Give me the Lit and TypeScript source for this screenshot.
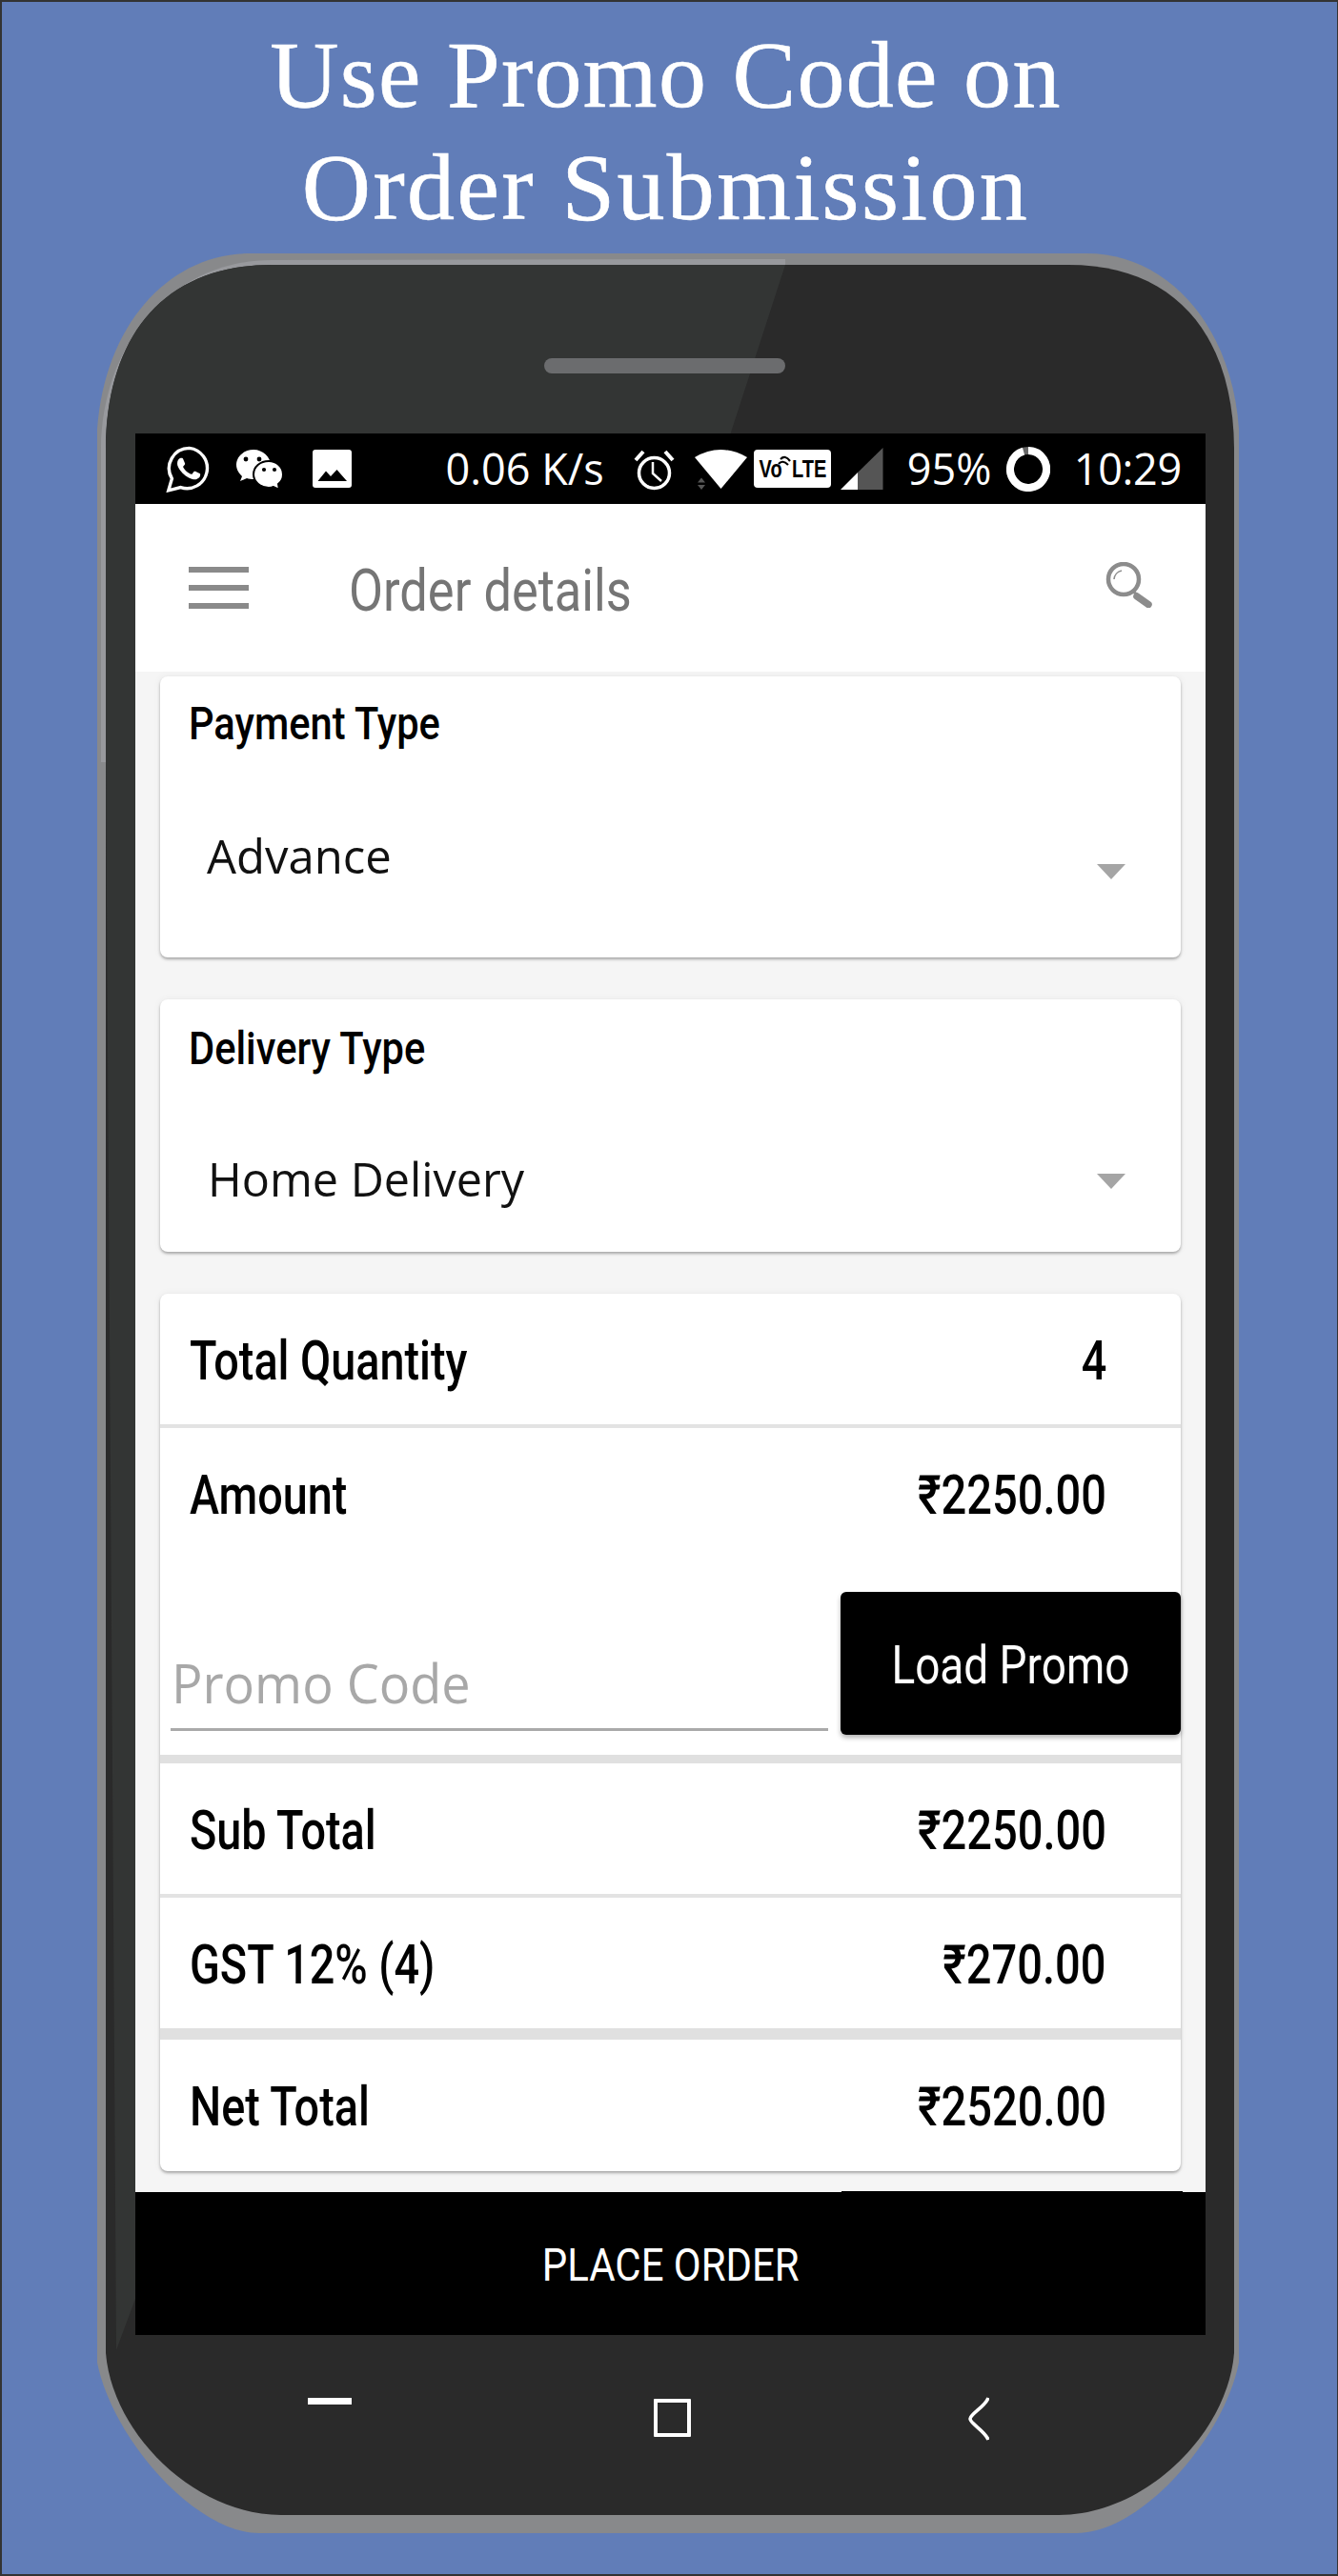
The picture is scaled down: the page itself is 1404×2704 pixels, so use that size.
import { LitElement, html, css } from "lit";
import { customElement } from "lit/decorators.js";

@customElement("app-root")
export class AppRoot extends LitElement {
  static styles = css`
    :host { display: block; width: 1404px; height: 2704px; }
    .page { width: 1404px; height: 2704px; box-sizing: border-box; background: #617db8; border-style: solid; border-color: #333; border-width: 2px 1px 2px 2px; padding-top: 18px; padding-left: 100px; overflow: hidden; }
    h1 { margin: 0 0 10px -100px; padding-right: 8px; font: 400 100px/118px "Liberation Serif", serif; color: #fff; text-align: center; -webkit-text-stroke: 0.6px #fff; }
    .l1 { letter-spacing: 1.3px; }
    .l2 { letter-spacing: 2.4px; }
    .phone { position: relative; width: 1198px; height: 2393px; box-sizing: border-box; padding: 189px 35px 0 40px; }
    .frame { position: absolute; inset: 0; width: 1198px; height: 2393px; }
    .screen { position: relative; width: 1123px; height: 1996px; display: flex; flex-direction: column; background: #f5f5f5; overflow: hidden; }
    .status { height: 74px; flex: none; display: flex; align-items: flex-start; background: #000; color: #fff; padding-left: 32px; font: 400 45px/74px "Open Sans", sans-serif; white-space: nowrap; }
    .status svg { display: block; flex: none; }
    .mt13 { margin-top: 13px; } .mt14 { margin-top: 14px; } .mt15 { margin-top: 15px; } .mt16 { margin-top: 16px; } .mt17 { margin-top: 17px; }
    .wc { margin-left: 26px; } .im { margin-left: 29.5px; } .speed { margin: 0 31px 0 99px; }
    .wifi { margin-left: 21px; } .volte { margin-left: 7px; } .sig { margin-left: 10.5px; } .pct { margin-left: 25px; width: 104px; } .time { margin-left: 25px; letter-spacing: -0.3px; }
    .vt { font: 700 25px "Liberation Sans", sans-serif; }
    .header { height: 176px; flex: none; display: flex; align-items: flex-start; background: #fff; }
    .menu { margin: 66px 0 0 56px; width: 63px; display: flex; flex-direction: column; gap: 13px; }
    .menu i { display: block; height: 6px; background: #8a8a8a; }
    .title { margin: 56px 0 0 105px; font: 400 62px/70px Roboto, sans-serif; color: #757575; }
    .search { display: block; margin: 61px 56px 0 auto; }
    .t { display: inline-block; white-space: nowrap; transform-origin: left center; }
    .r { transform-origin: right center; }
    .c { transform-origin: center center; }
    .sx82 { transform: scaleX(.82); }
    .sx825 { transform: scaleX(.825); }
    .sx845 { transform: scaleX(.845); }
    .sx85 { transform: scaleX(.85); }
    .sx855 { transform: scaleX(.855); }
    .sx965 { transform: scaleX(.965); }
    .sx97 { transform: scaleX(.97); }
    .sx98 { transform: scaleX(.98); }
    .content { flex: 1; min-height: 0; padding: 5px 26px 0; display: flex; flex-direction: column; gap: 44px; }
    .card { background: #fff; border-radius: 8px; box-shadow: 0 2px 3px rgba(0,0,0,.3), 0 0 8px rgba(0,0,0,.05); flex: none; }
    .card1 { height: 295px; padding: 20px 0 0 30px; box-sizing: border-box; }
    .card2 { height: 265px; padding: 22px 0 0 30px; box-sizing: border-box; }
    .label { font: 500 49px/60px Roboto, sans-serif; color: #000; }
    .sel { display: flex; justify-content: space-between; align-items: flex-start; font: 400 50px/70px "Open Sans", sans-serif; color: #111; margin-right: 58px; }
    .card1 .sel { margin-top: 73px; padding-left: 19px; }
    .card2 .sel { margin-top: 71px; padding-left: 20px; }
    .arrow { display: block; width: 0; height: 0; border-left: 15.5px solid transparent; border-right: 15.5px solid transparent; border-top: 16px solid #a5a5a5; }
    .card1 .arrow { margin-top: 44px; }
    .card2 .arrow { margin-top: 30px; }
    .row { display: flex; justify-content: space-between; align-items: center; box-sizing: border-box; padding: 4px 78px 0 31px; height: 137px; font: 500 57px/70px Roboto, sans-serif; color: #000; }
    .tall { height: 138px; }
    .sep3 { height: 4px; background: #e3e3e3; }
    .sep9 { height: 9px; background: #e0e0e0; }
    .sep12 { height: 12px; background: #e0e0e0; }
    .gap { height: 35px; }
    .promo { display: flex; height: 171px; padding-left: 11px; }
    .field { width: 690px; }
    .ph { margin-top: 60px; padding-left: 1px; font: 400 56px/70px "Open Sans", sans-serif; color: #a8a8a8; }
    .line { margin-top: 13px; height: 3px; background: #aaa; }
    .btn { margin-left: 13px; width: 357px; height: 150px; box-sizing: border-box; padding-top: 4px; border-radius: 6px; background: #000; color: #fff; font: 400 56px/70px Roboto, sans-serif; display: flex; align-items: center; justify-content: center; box-shadow: 0 3px 5px rgba(0,0,0,.3); }
    .place { position: relative; height: 150px; flex: none; box-sizing: border-box; padding-top: 4px; background: #000; color: #fff; font: 400 49px/60px Roboto, sans-serif; display: flex; align-items: center; justify-content: center; }
    .peek { position: absolute; left: 741px; top: -1px; width: 358px; height: 1px; background: #000; }
    .nav { position: relative; display: flex; align-items: flex-start; padding-left: 181px; }
    .minus { width: 46px; height: 7px; margin-top: 66px; background: #fff; }
    .square { width: 39px; height: 40px; box-sizing: border-box; margin: 67px 0 0 317px; border: 4px solid #fff; border-radius: 1px; }
    .back { display: block; margin: 65px 0 0 291px; }
  `;

  render() {
    return html`<div class="page">
      <h1><span class="l1">Use Promo Code on</span><br /><span class="l2">Order Submission</span></h1>
      <div class="phone">
        ${this.frame()}
        <div class="screen">
          <div class="status">
            ${this.whatsapp()} ${this.wechat()} ${this.image()}
            <span class="speed">0.06 K/s</span>
            ${this.alarm()} ${this.wifi()} ${this.volte()} ${this.signal()}
            <span class="pct">95%</span>
            ${this.ring()}
            <span class="time">10:29</span>
          </div>
          <div class="header">
            <div class="menu"><i></i><i></i><i></i></div>
            <div class="title"><span class="t sx845">Order details</span></div>
            ${this.search()}
          </div>
          <div class="content">
            <div class="card card1">
              <div class="label"><span class="t sx85">Payment Type</span></div>
              <div class="sel"><span class="t sx98">Advance</span><span class="arrow"></span></div>
            </div>
            <div class="card card2">
              <div class="label"><span class="t sx85">Delivery Type</span></div>
              <div class="sel"><span class="t sx97">Home Delivery</span><span class="arrow"></span></div>
            </div>
            <div class="card">
              <div class="row"><span class="t sx82">Total Quantity</span><span class="t r sx82">4</span></div>
              <div class="sep3"></div>
              <div class="row"><span class="t sx82">Amount</span><span class="t r sx825">₹2250.00</span></div>
              <div class="gap"></div>
              <div class="promo">
                <div class="field"><div class="ph"><span class="t sx965">Promo Code</span></div><div class="line"></div></div>
                <div class="btn"><span class="t c sx82">Load Promo</span></div>
              </div>
              <div class="sep9"></div>
              <div class="row"><span class="t sx82">Sub Total</span><span class="t r sx825">₹2250.00</span></div>
              <div class="sep3"></div>
              <div class="row"><span class="t sx82">GST 12% (4)</span><span class="t r sx825">₹270.00</span></div>
              <div class="sep12"></div>
              <div class="row tall"><span class="t sx82">Net Total</span><span class="t r sx825">₹2520.00</span></div>
            </div>
          </div>
          <div class="place"><span class="peek"></span><span class="t c sx855">PLACE ORDER</span></div>
        </div>
        <div class="nav">
          <div class="minus"></div>
          <div class="square"></div>
          ${this.backKey()}
        </div>
      </div>
    </div>`;
  }

  frame() {
    return html`<svg class="frame" viewBox="102 266 1198 2393">
      <path fill="#88898b" d="M102 450C110 340 178 266 262 266H1140C1224 266 1292 340 1300 450V2480C1284 2560 1197 2659 1130 2659H272C205 2659 118 2560 102 2480Z"/>
      <path fill="#98999d" d="M824 272L285 273C185 273 108 355 106 470V800H111L824 278Z"/>
      <path fill="#2a2a2a" d="M111 470C112 355 170 278 285 278H1121C1236 278 1294 355 1295 470V2470C1288 2555 1201 2640 1111 2640H295C205 2640 118 2555 111 2470Z"/>
      <path fill="#333534" d="M285 278H824L765 460H142V2413L122 2467L111 800V470C112 355 170 278 285 278Z"/>
      <rect x="571" y="376" width="253" height="16" rx="8" fill="#6b6c6e"/>
    </svg>`;
  }

  whatsapp() {
    return html`<svg class="mt13" width="48" height="49" viewBox="0 0 24 24.5">
      <path fill="none" stroke="#fff" stroke-width="1.7" d="M12.3 1.2A10.6 10.6 0 0 0 3.2 17.2L1.4 23.4 7.8 21.8A10.6 10.6 0 1 0 12.3 1.2Z"/>
      <path fill="#fff" d="M17.47 14.38c-.3-.15-1.76-.87-2.03-.97-.27-.1-.47-.15-.67.15-.2.3-.77.97-.94 1.17-.17.2-.35.22-.64.07-.3-.15-1.26-.46-2.39-1.47-.88-.79-1.48-1.76-1.65-2.06-.17-.3-.02-.46.13-.6.13-.13.3-.35.45-.52.15-.17.2-.3.3-.5.1-.2.05-.37-.03-.52-.07-.15-.67-1.61-.92-2.21-.24-.58-.49-.5-.67-.51h-.57c-.2 0-.52.07-.79.37-.27.3-1.04 1.02-1.04 2.48s1.07 2.88 1.21 3.07c.15.2 2.1 3.2 5.08 4.49.71.3 1.26.49 1.69.63.71.22 1.36.19 1.87.12.57-.09 1.76-.72 2.01-1.41.25-.7.25-1.29.17-1.41-.07-.13-.27-.2-.57-.35z"/>
    </svg>`;
  }
  wechat() {
    return html`<svg class="wc mt17" width="50" height="42" viewBox="0 0 50 42">
      <path fill="#fff" d="M18 0C8 0 0 7 0 16c0 5 3 9 6 12l-2 5 7-3c2 .7 5 1 7 1 10 0 18-7 18-15S28 0 18 0Z"/>
      <path fill="#fff" stroke="#000" stroke-width="2" d="M34 12C25 12 18 18 18 26c0 7 7 14 16 14 2 0 3 0 5-1l6 3-1-6c3-2 5-6 5-10 0-8-7-14-15-14Z"/>
      <circle cx="10" cy="10" r="2.4"/><circle cx="24" cy="10" r="2.4"/>
      <circle cx="29" cy="21" r="2.1"/><circle cx="40" cy="21" r="2.1"/>
    </svg>`;
  }
  image() {
    return html`<svg class="im mt17" width="41" height="40" viewBox="0 0 41 40">
      <rect width="41" height="40" rx="3" fill="#fff"/>
      <path d="M5.5 33L14 22.5 19 28 25.5 21 36 33Z"/>
    </svg>`;
  }
  alarm() {
    return html`<svg class="mt16" width="43" height="44" viewBox="0 0 43 44" fill="none" stroke="#fff">
      <circle cx="21.5" cy="25.5" r="16" stroke-width="3.5"/>
      <path stroke-width="2.5" d="M20 14V26L29 34"/>
      <path stroke-width="4" d="M2 12L10 3M41 12L33 3"/>
    </svg>`;
  }
  wifi() {
    return html`<svg class="wifi mt17" width="55" height="43" viewBox="0 0 55 43">
      <path fill="#fff" d="M0 8Q27 -8 55 8L27.5 41Z"/>
      <path fill="#555" d="M3 34.5L7 29.5 11 34.5ZM3 37H11L7 42Z"/>
    </svg>`;
  }
  volte() {
    return html`<svg class="volte mt17" width="81" height="40" viewBox="0 0 81 40">
      <rect width="81" height="40" rx="4" fill="#fff"/>
      <g transform="scale(.8 1)">
        <text class="vt" x="7" y="29">Vo</text>
        <text class="vt" x="50" y="29">LTE</text>
      </g>
      <path fill="none" stroke="#000" stroke-width="2.2" d="M26 15Q30 10 36 16M28 10Q33 5 38 12"/>
    </svg>`;
  }
  signal() {
    return html`<svg class="sig mt15" width="44.5" height="44" viewBox="0 0 44.5 44">
      <path fill="#fff" d="M0 44L18 26V44Z"/>
      <path fill="#555" d="M18 26L44.5 0V44H18Z"/>
    </svg>`;
  }
  ring() {
    return html`<svg class="mt14" width="46" height="47" viewBox="0 0 46 47" fill="none">
      <ellipse cx="23" cy="23.5" rx="19" ry="19.5" stroke="#666" stroke-width="8"/>
      <path stroke="#fff" stroke-width="8" d="M23 4A19 19.5 0 1 1 18 4.7"/>
    </svg>`;
  }
  search() {
    return html`<svg class="search" width="49" height="48" viewBox="0 0 49 48" fill="none" stroke="#8c8c8c">
      <circle cx="19" cy="18" r="16" stroke-width="4.5"/>
      <path stroke-width="1.6" d="M9 18A10 10 0 0 1 17 9"/>
      <path stroke-width="3" d="M29 31L33 34"/>
      <path stroke-width="7.5" stroke-linecap="round" d="M33 36L45 44.5"/>
    </svg>`;
  }
  backKey() {
    return html`<svg class="back" width="22" height="46" viewBox="0 0 22 46" fill="none" stroke="#fff" stroke-width="3.6">
      <path d="M21 1C18 10 2 18 2 23C2 28 18 36 21 45"/>
    </svg>`;
  }
}
